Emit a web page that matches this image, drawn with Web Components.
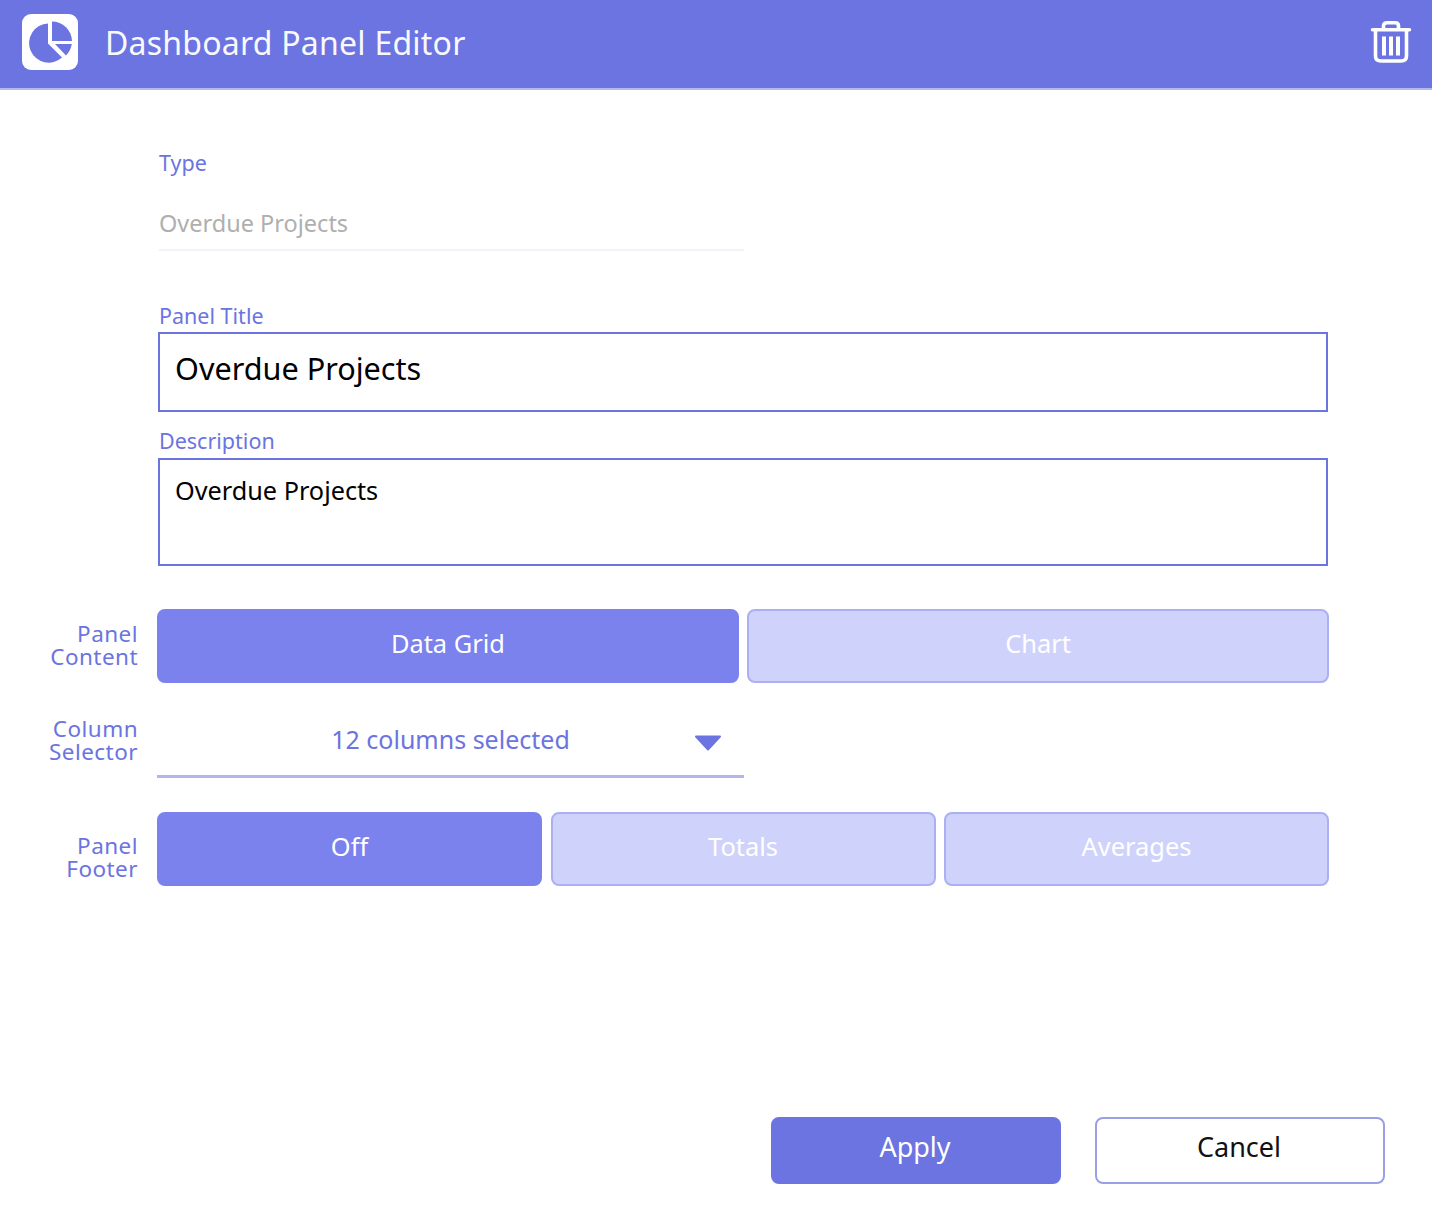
<!DOCTYPE html>
<html>
<head>
<meta charset="utf-8">
<title>Dashboard Panel Editor</title>
<style>
  html, body { margin: 0; padding: 0; background: #fff; }
  body { font-family: "Noto Sans", "Open Sans", sans-serif; width: 1432px; height: 1206px; overflow: hidden; }
</style>
</head>
<body>
<panel-editor></panel-editor>

<script>
// Top bar with logo, title and trash icon
class PanelHeader extends HTMLElement {
  constructor() {
    super();
    this.attachShadow({mode: 'open'});
    this.shadowRoot.innerHTML = `
      <style>
        :host {
          display: flex;
          align-items: center;
          height: 88px;
          background: #6b74e0;
          border-bottom: 2px solid #b4b8f0;
          padding: 0 20px 0 22px;
          color: #fff;
        }
        .logo { width: 56px; height: 56px; flex-shrink: 0; margin-top: -4px; }
        h1 { flex: 1; margin: -2px 0 0 27px; font-size: 32px; font-weight: 400; line-height: 44px; letter-spacing: .23px; opacity: .96; }
        .trash { width: 42px; height: 48px; flex-shrink: 0; margin-top: -2px; }
      </style>
      <svg class="logo" viewBox="0 0 56 56">
        <rect width="56" height="56" rx="9" fill="#fff"/>
        <path d="M26 9.500V29.500L40 43.500A19.600 19.600 0 1 1 26 9.500Z" fill="#6b74e0"/>
        <path d="M30 7.500A20 20 0 0 1 50 27H30Z" fill="#6b74e0"/>
        <path d="M33 30H49.800A21 21 0 0 1 44 41.500Z" fill="#6b74e0"/>
      </svg>
      <h1><slot></slot></h1>
      <svg class="trash" viewBox="0 0 42 48" fill="none" stroke="#fff" stroke-width="3.600">
        <path d="M2.500 10.800H39.500" stroke-linecap="round"/>
        <path d="M13.500 10V7C13.500 4.500 15 3.800 17 3.800H25C27 3.800 28.500 4.500 28.500 7V10"/>
        <path d="M5.500 11V37C5.500 40.500 7.500 42 11 42H31C34.500 42 36.500 40.500 36.500 37V11"/>
        <path d="M14 17.500V36.500M21 17.500V36.500M28 17.500V36.500" stroke-width="4"/>
      </svg>
    `;
  }
}
customElements.define('panel-header', PanelHeader);

// Read only value with a caption above it
class ReadonlyField extends HTMLElement {
  constructor() {
    super();
    this.attachShadow({mode: 'open'});
    this.shadowRoot.innerHTML = `
      <style>
        :host { display: block; width: 585px; }
        .label { font-size: 21.500px; line-height: 28px; color: #6b74e0; }
        .value {
          margin-top: 30px;
          font-size: 23.500px;
          line-height: 32px;
          color: #afafaf;
          padding-bottom: 10px;
          border-bottom: 2px solid #f2f2f8;
        }
      </style>
      <div class="label"></div>
      <div class="value"><slot></slot></div>
    `;
    this.shadowRoot.querySelector('.label').textContent = this.getAttribute('label') || '';
  }
}
customElements.define('readonly-field', ReadonlyField);

// Caption and outlined box
class BoxField extends HTMLElement {
  constructor() {
    super();
    this.attachShadow({mode: 'open'});
    this.shadowRoot.innerHTML = `
      <style>
        :host { display: block; width: 1170px; }
        .label { font-size: 21.500px; line-height: 28px; padding-left: 1px; color: #6b74e0; }
        .box {
          box-sizing: border-box;
          border: 2px solid #6b74e0;
          padding: 0 15px;
          color: #000;
          margin-top: 2px;
        }
        :host([kind="title"]) .box { height: 80px; font-size: 30.600px; line-height: 68px; }
        :host([kind="area"]) .box { height: 108px; font-size: 25.250px; line-height: 60px; margin-top: 3px; }
      </style>
      <div class="label"></div>
      <div class="box"><slot></slot></div>
    `;
    this.shadowRoot.querySelector('.label').textContent = this.getAttribute('label') || '';
  }
}
customElements.define('box-field', BoxField);

// Side caption + control
class FormRow extends HTMLElement {
  constructor() {
    super();
    this.attachShadow({mode: 'open'});
    this.shadowRoot.innerHTML = `
      <style>
        :host { display: flex; align-items: center; }
        .label {
          width: 138px;
          margin-right: 19px;
          margin-top: -2px;
          flex-shrink: 0;
          text-align: right;
          font-size: 22.500px;
          line-height: 23px;
          color: #6b74e0;
          letter-spacing: .45px;
        }
        :host(.r-column) .label { margin-top: -4px; }
        :host(.r-footer) .label { margin-top: 16px; }
        .control { flex: 1; min-width: 0; }
      </style>
      <div class="label"></div>
      <div class="control"><slot></slot></div>
    `;
    this.shadowRoot.querySelector('.label').innerHTML = (this.getAttribute('label') || '').replace('|', '<br>');
  }
}
customElements.define('form-row', FormRow);

// Segmented toggle group
class SegGroup extends HTMLElement {
  constructor() {
    super();
    this.attachShadow({mode: 'open'});
    this.shadowRoot.innerHTML = `
      <style>
        :host { display: flex; gap: 8.500px; height: 74px; width: 1172px; }
        ::slotted(*) { flex: 1; }
      </style>
      <slot></slot>
    `;
  }
}
customElements.define('seg-group', SegGroup);

class SegButton extends HTMLElement {
  constructor() {
    super();
    this.attachShadow({mode: 'open'});
    this.shadowRoot.innerHTML = `
      <style>
        :host {
          display: flex;
          align-items: center;
          justify-content: center;
          box-sizing: border-box;
          min-width: 0;
          padding-bottom: 6px;
          border-radius: 8px;
          font-size: 25.400px;
          color: #fff;
          background: #cfd3fb;
          border: 2px solid #aab0f3;
        }
        :host([active]) { background: #7b82ee; border-color: #7b82ee; }
      </style>
      <slot></slot>
    `;
  }
}
customElements.define('seg-button', SegButton);

// Dropdown with underline
class ColumnSelect extends HTMLElement {
  constructor() {
    super();
    this.attachShadow({mode: 'open'});
    this.shadowRoot.innerHTML = `
      <style>
        :host {
          display: flex;
          align-items: center;
          box-sizing: border-box;
          width: 587px;
          height: 73px;
          border-bottom: 3px solid #b3b6ee;
          color: #6b74e0;
          font-size: 25px;
          position: relative;
        }
        .text { flex: 1; text-align: center; margin-top: -2px; }
        svg { position: absolute; right: 22px; top: 30px; width: 28px; height: 16px; }
      </style>
      <div class="text"><slot></slot></div>
      <svg viewBox="0 0 28 16"><path d="M2 1.500H26L14 14.500Z" fill="#6b74e0" stroke="#6b74e0" stroke-width="2" stroke-linejoin="round"/></svg>
    `;
  }
}
customElements.define('column-select', ColumnSelect);

class ActionButton extends HTMLElement {
  constructor() {
    super();
    this.attachShadow({mode: 'open'});
    this.shadowRoot.innerHTML = `
      <style>
        :host {
          display: flex;
          align-items: center;
          justify-content: center;
          box-sizing: border-box;
          width: 290px;
          height: 67px;
          padding: 0 2px 8px 0;
          border-radius: 8px;
          font-size: 27px;
          color: #111;
          background: #fff;
          border: 2px solid #9a9fe6;
        }
        :host([primary]) { background: #6b74e0; border-color: #6b74e0; color: #fff; }
      </style>
      <slot></slot>
    `;
  }
}
customElements.define('action-button', ActionButton);

// The whole dialog
class PanelEditor extends HTMLElement {
  constructor() {
    super();
    this.attachShadow({mode: 'open'});
    this.shadowRoot.innerHTML = `
      <style>
        :host { display: flex; flex-direction: column; height: 1206px; box-sizing: border-box; }
        .form { display: flex; flex-direction: column; padding: 59px 0 0 0; flex: 1; }
        .fields { display: flex; flex-direction: column; padding-left: 158px; }
        readonly-field { margin-left: 1px; }
        .f-title { margin-top: 51px; }
        .f-desc { margin-top: 15px; }
        .rows { display: flex; flex-direction: column; margin-top: 43px; }
        .r-column { margin-top: 22px; }
        .r-footer { margin-top: 34px; }
        .actions { display: flex; justify-content: flex-end; gap: 34px; padding: 0 47px 22px 0; }
      </style>
      <panel-header>Dashboard Panel Editor</panel-header>
      <div class="form">
        <div class="fields">
          <readonly-field label="Type">Overdue Projects</readonly-field>
          <box-field class="f-title" kind="title" label="Panel Title">Overdue Projects</box-field>
          <box-field class="f-desc" kind="area" label="Description">Overdue Projects</box-field>
        </div>
        <div class="rows">
          <form-row label="Panel|Content">
            <seg-group>
              <seg-button active>Data Grid</seg-button>
              <seg-button>Chart</seg-button>
            </seg-group>
          </form-row>
          <form-row class="r-column" label="Column|Selector">
            <column-select>12 columns selected</column-select>
          </form-row>
          <form-row class="r-footer" label="Panel|Footer">
            <seg-group>
              <seg-button active>Off</seg-button>
              <seg-button>Totals</seg-button>
              <seg-button>Averages</seg-button>
            </seg-group>
          </form-row>
        </div>
      </div>
      <div class="actions">
        <action-button primary>Apply</action-button>
        <action-button>Cancel</action-button>
      </div>
    `;
  }
}
customElements.define('panel-editor', PanelEditor);
</script>
</body>
</html>
